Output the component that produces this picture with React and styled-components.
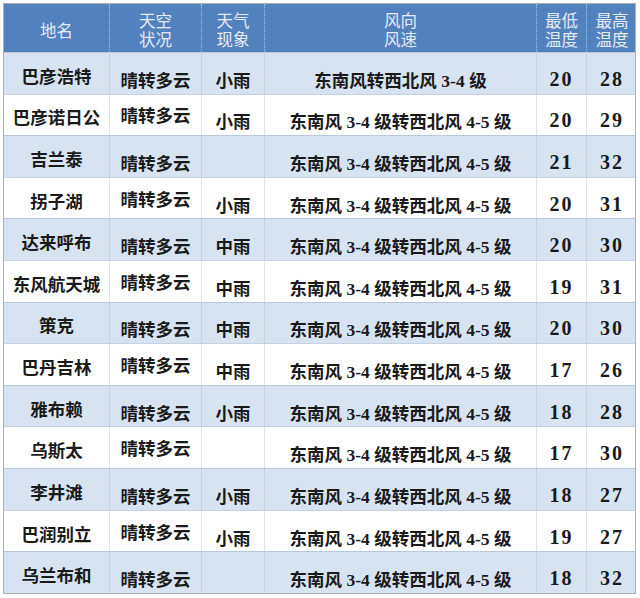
import React from "react";
import styled, { createGlobalStyle } from "styled-components";

const Global = createGlobalStyle`
  html, body { margin: 0; padding: 0; background: #ffffff; }
  body { font-family: "Noto Sans CJK SC", "Noto Sans", sans-serif; }
`;

const COLS = "105px 92px 63px 272px 50px 51px";

const Page = styled.div`
  width: 640px;
  height: 598px;
  padding: 3px 4px 4px 3px;
  box-sizing: border-box;
`;

const Table = styled.div`
  width: 633px;
  height: 591px;
  display: flex;
  flex-direction: column;
  border: 1px solid #a9b1bd;
  box-sizing: border-box;
`;

const HeaderRow = styled.div`
  display: grid;
  grid-template-columns: ${COLS};
  height: 48px;
  background: #5282be;
  flex: none;
`;

const HeadCell = styled.div`
  display: flex;
  flex-direction: column;
  align-items: center;
  justify-content: center;
  padding-top: 4px;
  color: #e4ebf5;
  font-family: "Noto Sans CJK SC", sans-serif;
  font-weight: 400;
  font-size: 16.5px;
  line-height: 19px;
  border-left: ${(p) => (p.$first ? "none" : "1px dotted #a9c3e4")};
`;

const HeadLine = styled.span`
  display: block;
  height: 19px;
`;

const BodyRow = styled.div`
  display: grid;
  grid-template-columns: ${COLS};
  flex: 1;
  background: ${(p) => (p.$shade ? "#d8e3f1" : "#ffffff")};
  border-top: 1px solid ${(p) => (p.$shade ? "#b9c8dc" : "#c6d2e2")};
`;

const Cell = styled.div`
  display: flex;
  align-items: center;
  justify-content: center;
  padding-top: ${(p) => p.$shift * 2}px;
  box-sizing: border-box;
  color: #1a1a1a;
  font-family: "Noto Sans CJK SC", sans-serif;
  font-weight: 700;
  font-size: 17.5px;
  white-space: nowrap;
  border-left: ${(p) =>
    p.$first ? "none" : p.$shade ? "1px solid #c5d2e4" : "1px solid #dfe5ee"};
`;

const Wind = styled.span`
  white-space: pre;
`;

const Digits = styled.span`
  font-family: "Liberation Serif", serif;
  font-weight: 700;
  font-size: 17.5px;
`;

const Gap = styled.span`
  font-family: "Liberation Serif", serif;
  font-size: 18px;
`;

const Temp = styled.span`
  font-family: "Liberation Serif", serif;
  font-weight: 700;
  font-size: 20px;
  letter-spacing: 2px;
`;

const STD = "东南风 3-4 级转西北风 4-5 级";

const rows = [
  ["巴彦浩特", "晴转多云", "小雨", "东南风转西北风 3-4 级", "20", "28"],
  ["巴彦诺日公", "晴转多云", "小雨", STD, "20", "29"],
  ["吉兰泰", "晴转多云", "", STD, "21", "32"],
  ["拐子湖", "晴转多云", "小雨", STD, "20", "31"],
  ["达来呼布", "晴转多云", "中雨", STD, "20", "30"],
  ["东风航天城", "晴转多云", "中雨", STD, "19", "31"],
  ["策克", "晴转多云", "中雨", STD, "20", "30"],
  ["巴丹吉林", "晴转多云", "中雨", STD, "17", "26"],
  ["雅布赖", "晴转多云", "小雨", STD, "18", "28"],
  ["乌斯太", "晴转多云", "", STD, "17", "30"],
  ["李井滩", "晴转多云", "小雨", STD, "18", "27"],
  ["巴润别立", "晴转多云", "小雨", STD, "19", "27"],
  ["乌兰布和", "晴转多云", "", STD, "18", "32"],
];

function WindText({ text }) {
  const parts = text.split(/( |\d-\d)/).filter((s) => s !== "");
  return (
    <Wind>
      {parts.map((part, i) =>
        part === " " ? (
          <Gap key={i}> </Gap>
        ) : /\d-\d/.test(part) ? (
          <Digits key={i}>{part}</Digits>
        ) : (
          <span key={i}>{part}</span>
        )
      )}
    </Wind>
  );
}

const headers = [["地名"], ["天空", "状况"], ["天气", "现象"], ["风向", "风速"], ["最低", "温度"], ["最高", "温度"]];

export default function App() {
  return (
    <>
      <Global />
      <Page>
        <Table>
          <HeaderRow>
            {headers.map((lines, i) => (
              <HeadCell key={i} $first={i === 0}>
                {lines.map((l) => (
                  <HeadLine key={l}>{l}</HeadLine>
                ))}
              </HeadCell>
            ))}
          </HeaderRow>
          {rows.map((r, idx) => {
            const shade = idx % 2 === 0;
            const shifts = [2, shade ? 6 : -1, 6, 6, 6, 6];
            return (
              <BodyRow key={idx} $shade={shade}>
                {r.map((v, c) => (
                  <Cell key={c} $first={c === 0} $shade={shade} $shift={shifts[c]}>
                    {c === 3 ? <WindText text={v} /> : c >= 4 ? <Temp>{v}</Temp> : v}
                  </Cell>
                ))}
              </BodyRow>
            );
          })}
        </Table>
      </Page>
    </>
  );
}
